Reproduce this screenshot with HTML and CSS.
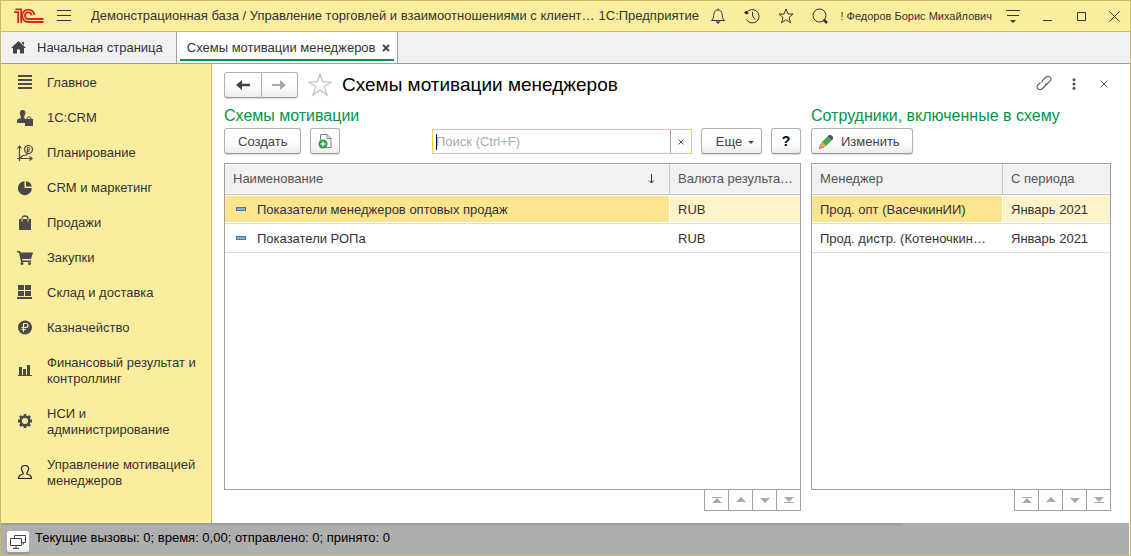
FILE: index.html
```html
<!DOCTYPE html>
<html lang="ru">
<head>
    <meta charset="UTF-8">
    <meta name="viewport" content="width=device-width, initial-scale=1.0">
    <title>Схемы мотивации менеджеров</title>
    <link rel="stylesheet" href="styles.css">
</head>
<body>
    <header class="titlebar">
        <svg class="logo" width="30" height="16" viewBox="0 0 30 16" fill="none" stroke="#d9251d" stroke-width="1.8">
            <path d="M0 4.200H4.200V15M1.500 1.300H7.200V15"/>
            <path d="M20.500 7A6.200 6.200 0 1 0 14.300 14H29.500"/>
            <path d="M17.600 7.500A3.300 3.300 0 1 0 14.300 11H29.500"/>
        </svg>
        <button class="icon-btn menu-btn" aria-label="Меню">
            <svg width="14" height="12" viewBox="0 0 14 12" stroke="#333"><path d="M0 .5H14M0 5.500H14M0 10.500H14"/></svg>
        </button>
        <span class="app-title">Демонстрационная база / Управление торговлей и взаимоотношениями с клиент…</span>
        <span class="app-name">1С:Предприятие</span>
        <div class="title-tools">
            <button class="icon-btn" aria-label="Уведомления">
                <svg width="14" height="16" viewBox="0 0 14 16" fill="none" stroke="#333">
                    <path d="M7 .5V2M.5 12.500C3 10.500 2.500 8 3 5.500C3.500 3 5 2 7 2S10.500 3 11 5.500C11.500 8 11 10.500 13.500 12.500Z"/>
                    <path d="M4.500 13.500H9.500L7 16Z" fill="#333" stroke="none"/>
                </svg>
            </button>
            <button class="icon-btn" aria-label="История">
                <svg width="16" height="16" viewBox="0 0 16 16" fill="none" stroke="#333">
                    <path d="M2.500 5A6.700 6.700 0 1 1 2.500 11.500M8.500 4V8L11 11.500"/>
                    <path d="M0 4.500L2.500 2.500L5 5.500L2 6.500Z" fill="#333" stroke="none"/>
                </svg>
            </button>
            <button class="icon-btn" aria-label="Избранное">
                <svg width="16" height="16" viewBox="0 0 16 16" fill="none" stroke="#333">
                    <path d="M8 1L10 6H15L11 9.500L12.500 14.800L8 11.700L3.500 14.800L5 9.500L1 6H6Z"/>
                </svg>
            </button>
            <button class="icon-btn" aria-label="Поиск">
                <svg width="16" height="16" viewBox="0 0 16 16" fill="none" stroke="#333">
                    <circle cx="7.500" cy="7.500" r="6.500"/>
                    <path d="M11.500 11.500L15 15" stroke-width="2.500"/>
                </svg>
            </button>
        </div>
        <a class="user" href="#">! Федоров Борис Михайлович</a>
        <div class="window-tools">
            <button class="icon-btn" aria-label="Сервис">
                <svg width="14" height="14" viewBox="0 0 14 14" stroke="#333"><path d="M0 1.500H14M1 6.500H13"/><path d="M4 11H10L7 14Z" fill="#333" stroke="none"/></svg>
            </button>
            <button class="icon-btn" aria-label="Свернуть">
                <svg width="9" height="11" viewBox="0 0 9 11" stroke="#333"><path d="M0 9.500H9"/></svg>
            </button>
            <button class="icon-btn" aria-label="Развернуть">
                <svg width="9" height="9" viewBox="0 0 9 9" fill="none" stroke="#333"><path d="M.5 .5H8.500V8.500H.5Z"/></svg>
            </button>
            <button class="icon-btn" aria-label="Закрыть">
                <svg width="11" height="11" viewBox="0 0 11 11" stroke="#333"><path d="M.5 .5L10.500 10.500M10.500 .5L.5 10.500"/></svg>
            </button>
        </div>
    </header>

    <nav class="tabs">
        <a class="tab tab-home" href="#">
            <svg width="15" height="13" viewBox="0 0 15 13" fill="#444"><path d="M7.500 0L15 7H13V12.500H9V8.500H6V12.500H2V7H0ZM11 1H13V4L11 2.500Z"/></svg>
            Начальная страница
        </a>
        <div class="tab tab-active">
            <a href="#">Схемы мотивации менеджеров</a>
            <button class="icon-btn" aria-label="Закрыть вкладку">
                <svg width="8" height="8" viewBox="0 0 8 8" stroke="#444" stroke-width="1.800"><path d="M1 1L7 7M7 1L1 7"/></svg>
            </button>
        </div>
    </nav>

    <div class="workspace">
        <nav class="sidebar">
            <a class="section" href="#">
                <svg width="16" height="16" viewBox="0 0 16 16" fill="#4a4a4a"><path d="M1 0H15V2H1ZM1 4H15V6H1ZM1 8H15V10H1ZM1 12H15V14H1Z"/></svg>
                <span>Главное</span>
            </a>
            <a class="section" href="#">
                <svg width="16" height="16" viewBox="0 0 16 16" fill="#4a4a4a">
                    <path d="M5.500 0C8 0 8.500 1.500 8.300 3.500C8 5.500 7 6 7 7.500L8 8.500V13H0V10.500C0 9 2 8.500 4 8C4 6 3 5.500 2.800 3.500C2.600 1.500 3.500 0 5.500 0Z"/>
                    <path d="M8 9H16V16H8Z"/><path d="M10 9.500V8Q12 5 14 8V9.500" fill="none" stroke="#4a4a4a"/>
                </svg>
                <span>1С:CRM</span>
            </a>
            <a class="section" href="#">
                <svg width="16" height="16" viewBox="0 0 16 16" fill="none" stroke="#4a4a4a" stroke-width="1.200">
                    <path d="M2.500 1V16M0 13.500H15M.5 3.500L2.500 1L4.500 3.500M12.500 11.500L15 13.500L12.500 15.500M3 13L6 10.500L9 10L12 8"/>
                    <circle cx="11.500" cy="4.500" r="4"/><path d="M10.500 7.500V2.500H12Q13.500 3.500 12 5H9.500M9.500 6.300H12.500" stroke-width="1"/>
                </svg>
                <span>Планирование</span>
            </a>
            <a class="section" href="#">
                <svg width="16" height="16" viewBox="0 0 16 16" fill="#4a4a4a"><path d="M7.500 1.200V8H14.800A7 7 0 1 1 7.500 1.200Z"/><path d="M9 1.200A6.500 6.500 0 0 1 14.800 6.500H9Z"/></svg>
                <span>CRM и маркетинг</span>
            </a>
            <a class="section" href="#">
                <svg width="16" height="16" viewBox="0 0 16 16" fill="#4a4a4a"><path d="M2 4H14V15H2Z"/><path d="M5 6V3.500Q5 1 8 1T11 3.500V6" fill="none" stroke="#4a4a4a" stroke-width="1.300"/><path d="M5 4V6.500M11 4V6.500" stroke="#fbed9e"/></svg>
                <span>Продажи</span>
            </a>
            <a class="section" href="#">
                <svg width="16" height="16" viewBox="0 0 16 16" fill="#4a4a4a"><path d="M0 1H3L3.700 2.500H16L14 9H5.200L5.500 10.500H14V12H4L2 2.500H0Z"/><circle cx="5" cy="13.500" r="1.500"/><circle cx="12.500" cy="13.500" r="1.500"/></svg>
                <span>Закупки</span>
            </a>
            <a class="section" href="#">
                <svg width="16" height="16" viewBox="0 0 16 16" fill="#4a4a4a"><path d="M1 0H7V5H1ZM8 0H14V5H8ZM1 6H7V11H1ZM8 6H14V11H8ZM0 12H15V14H0Z"/></svg>
                <span>Склад и доставка</span>
            </a>
            <a class="section" href="#">
                <svg width="16" height="16" viewBox="0 0 16 16" fill="none"><circle cx="8" cy="7.500" r="7" fill="#4a4a4a"/><path d="M6.500 12V3.500H9Q11 3.500 11 5.500T9 7.500H4.500M4.500 9.500H9" stroke="#fbed9e" stroke-width="1.200"/></svg>
                <span>Казначейство</span>
            </a>
            <a class="section" href="#">
                <svg width="16" height="16" viewBox="0 0 16 16" fill="#4a4a4a"><path d="M2 4H5V12H2ZM6 6H9V12H6ZM10 2H13V12H10ZM1 12H15V13H1Z"/></svg>
                <span>Финансовый результат и контроллинг</span>
            </a>
            <a class="section" href="#">
                <svg width="16" height="16" viewBox="0 1 16 16" fill="none" stroke="#4a4a4a"><circle cx="8" cy="8" r="4.300" stroke-width="2.500"/><path d="M8 1V3M8 13V15M1 8H3M13 8H15M3 3L4.500 4.500M11.500 11.500L13 13M3 13L4.500 11.500M11.500 4.500L13 3" stroke-width="2.800"/></svg>
                <span>НСИ и администрирование</span>
            </a>
            <a class="section" href="#">
                <svg width="16" height="16" viewBox="0 1 16 16" fill="none" stroke="#222" stroke-width="1.200"><path d="M8 1.500C10.800 1.500 11.800 3.200 11.500 5.200C11.300 7 9.800 8 9.800 10C12 10.500 14.500 11 14.500 14.500H1.500C1.500 11 4 10.500 6.200 10C6.200 8 4.700 7 4.500 5.200C4.200 3.200 5.200 1.500 8 1.500Z"/></svg>
                <span>Управление мотивацией менеджеров</span>
            </a>
        </nav>

        <main class="content">
            <div class="page-head">
                <div class="history">
                    <button aria-label="Назад"><svg width="14" height="10" viewBox="0 0 14 10" fill="#444"><path d="M0 5L6 0V3.700H14V6.300H6V10Z"/></svg></button>
                    <button aria-label="Вперед"><svg width="14" height="10" viewBox="0 0 14 10" fill="#aaa"><path d="M14 5L8 0V4H0V6H8V10Z"/></svg></button>
                </div>
                <button class="icon-btn favorite" aria-label="В избранное">
                    <svg width="24" height="24" viewBox="0 0 24 24" fill="none" stroke="#b9bec4" stroke-width="1.200"><path d="M12 1.500L14.800 9H23L16.500 13.800L19 22L12 17L5 22L7.500 13.800L1 9H9.200Z"/></svg>
                </button>
                <h1>Схемы мотивации менеджеров</h1>
                <div class="page-tools">
                    <button class="icon-btn" aria-label="Получить ссылку">
                        <svg width="16" height="18" viewBox="0 0 16 18" fill="none" stroke="#555" stroke-width="1.100"><path d="M6 7.500Q6 5.500 7.500 4.500L10 2Q12 .5 14 2.200T14 6.200L11.500 8.700Q10.500 9.500 9 9.500M10 8.500Q10 10.500 8.500 11.500L6 14Q4 15.500 2 13.800T2 9.800L4.500 7.300"/></svg>
                    </button>
                    <button class="icon-btn" aria-label="Еще">
                        <svg width="4" height="12" viewBox="0 0 4 12" fill="#555"><circle cx="2" cy="1.700" r="1.500"/><circle cx="2" cy="6" r="1.500"/><circle cx="2" cy="10.300" r="1.500"/></svg>
                    </button>
                    <button class="icon-btn" aria-label="Закрыть форму">
                        <svg width="8" height="8" viewBox="0 0 8 8" stroke="#555"><path d="M.5 .5L7.500 7.500M7.500 .5L.5 7.500"/></svg>
                    </button>
                </div>
            </div>

            <div class="panels">
                <section class="panel">
                    <h2>Схемы мотивации</h2>
                    <div class="toolbar">
                        <button class="btn">Создать</button>
                        <button class="btn btn-square" aria-label="Создать копированием">
                            <svg width="14" height="16" viewBox="0 0 14 16" fill="none">
                                <path d="M2.500 7V1.500H9L13 5.500V14.500H8M9 1.500V5.500H13" stroke="#77879a"/>
                                <circle cx="5" cy="11" r="4.500" fill="#2e9b3d"/><path d="M5 8.500V13.500M2.500 11H7.500" stroke="#fff" stroke-width="1.500"/>
                            </svg>
                        </button>
                        <div class="search">
                            <input type="text" placeholder="Поиск (Ctrl+F)" aria-label="Поиск">
                            <button aria-label="Очистить"><svg width="6" height="6" viewBox="0 0 6 6" stroke="#555"><path d="M.5 .5L5.500 5.500M5.500 .5L.5 5.500"/></svg></button>
                        </div>
                        <button class="btn btn-more">Еще <svg width="6" height="3" viewBox="0 0 6 3" fill="#444"><path d="M0 0H6L3 3Z"/></svg></button>
                        <button class="btn btn-square btn-help">?</button>
                    </div>
                    <div class="list">
                        <table>
                            <thead>
                                <tr>
                                    <th><div class="sorted">Наименование <svg width="7" height="10" viewBox="0 0 7 10" fill="none" stroke="#333"><path d="M3.500 0V9M1 6.500L3.500 9L6 6.500"/></svg></div></th>
                                    <th class="col-currency">Валюта результатов</th>
                                </tr>
                            </thead>
                            <tbody>
                                <tr class="selected">
                                    <td><span class="item-mark"></span>Показатели менеджеров оптовых продаж</td>
                                    <td>RUB</td>
                                </tr>
                                <tr>
                                    <td><span class="item-mark"></span>Показатели РОПа</td>
                                    <td>RUB</td>
                                </tr>
                            </tbody>
                        </table>
                    </div>
                    <div class="pager">
                        <button aria-label="В начало"><svg width="10" height="6" viewBox="0 0 10 6" fill="#aaa"><path d="M0 0H10V1H0ZM5 1L10 6H0Z"/></svg></button>
                        <button aria-label="Вверх"><svg width="10" height="6" viewBox="0 0 10 6" fill="#aaa"><path d="M5 0L10 5H0Z"/></svg></button>
                        <button aria-label="Вниз"><svg width="10" height="6" viewBox="0 0 10 6" fill="#aaa"><path d="M0 1H10L5 6Z"/></svg></button>
                        <button aria-label="В конец"><svg width="10" height="6" viewBox="0 0 10 6" fill="#aaa"><path d="M0 5H10V6H0ZM0 0H10L5 5Z"/></svg></button>
                    </div>
                </section>

                <section class="panel">
                    <h2>Сотрудники, включенные в схему</h2>
                    <div class="toolbar">
                        <button class="btn btn-edit">
                            <svg width="14" height="14" viewBox="0 0 14 14"><path d="M0 14L1.500 9L5 12.500Z" fill="#444"/><path d="M1.500 9L3 7L7 11L5 12.500L1 13Z" fill="#e5a553"/><path d="M3 7L8.500 1.500L12.500 5.500L7 11Z" fill="#45ad51"/><path d="M8.500 1.500L10 0H12L14 2V4L12.500 5.500Z" fill="#46566b"/></svg>
                            Изменить
                        </button>
                    </div>
                    <div class="list">
                        <table>
                            <thead>
                                <tr>
                                    <th>Менеджер</th>
                                    <th class="col-period">С периода</th>
                                </tr>
                            </thead>
                            <tbody>
                                <tr class="selected">
                                    <td>Прод. опт (ВасечкинИИ)</td>
                                    <td>Январь 2021</td>
                                </tr>
                                <tr>
                                    <td>Прод. дистр. (КотеночкинАА)</td>
                                    <td>Январь 2021</td>
                                </tr>
                            </tbody>
                        </table>
                    </div>
                    <div class="pager">
                        <button aria-label="В начало"><svg width="10" height="6" viewBox="0 0 10 6" fill="#aaa"><path d="M0 0H10V1H0ZM5 1L10 6H0Z"/></svg></button>
                        <button aria-label="Вверх"><svg width="10" height="6" viewBox="0 0 10 6" fill="#aaa"><path d="M5 0L10 5H0Z"/></svg></button>
                        <button aria-label="Вниз"><svg width="10" height="6" viewBox="0 0 10 6" fill="#aaa"><path d="M0 1H10L5 6Z"/></svg></button>
                        <button aria-label="В конец"><svg width="10" height="6" viewBox="0 0 10 6" fill="#aaa"><path d="M0 5H10V6H0ZM0 0H10L5 5Z"/></svg></button>
                    </div>
                </section>
            </div>
        </main>
    </div>

    <footer class="statusbar">
        <div class="load-line"></div>
        <div class="status-row">
            <button class="calls-btn" aria-label="Вызовы сервера">
                <svg width="16" height="14" viewBox="0 0 16 14" fill="none" stroke="#444"><path d="M4.500 3V.5H15.500V7.500H12M.5 3.500H11.500V10.500H.5ZM6 10.500V13M3 13.500H9M13.500 7.500V9.500"/></svg>
            </button>
            <span>Текущие вызовы: 0; время: 0,00; отправлено: 0; принято: 0</span>
        </div>
    </footer>
</body>
</html>
```

FILE: styles.css
```css
* {
    box-sizing: border-box;
}

body {
    margin: 0;
    min-height: 100vh;
    display: flex;
    flex-direction: column;
    border: 1px solid #c8b968;
    background: #fff;
    color: #333;
    font-family: "Liberation Sans", Arial, sans-serif;
    font-size: 13px;
    line-height: 16px;
}

a {
    color: inherit;
    text-decoration: none;
}

button {
    font: inherit;
    color: #444;
    cursor: pointer;
}

svg {
    display: block;
    flex: none;
}

.icon-btn {
    display: flex;
    align-items: center;
    justify-content: center;
    padding: 0;
    border: none;
    background: none;
}

/* title bar */
.titlebar {
    display: flex;
    align-items: center;
    height: 31px;
    padding-left: 13px;
    background: #fbed9e;
    border-bottom: 1px solid #c8b968;
    white-space: nowrap;
}

.menu-btn {
    width: 14px;
    margin: 0 20px 0 13px;
}

.app-title {
    min-width: 0;
    overflow: hidden;
    text-overflow: ellipsis;
}

.app-name {
    margin-left: 4px;
}

.title-tools,
.window-tools {
    display: flex;
}

.title-tools {
    margin-left: auto;
}

.title-tools .icon-btn,
.window-tools .icon-btn {
    width: 34px;
    height: 30px;
}

.window-tools .icon-btn:last-child {
    width: 32px;
}

.user {
    margin: 0 4px 0 3px;
    font-size: 11px;
}

/* tabs */
.tabs {
    display: flex;
    height: 32px;
    background: #f1f1f1;
    border-bottom: 1px solid #a0a0a0;
}

.tab {
    display: flex;
    align-items: center;
    border-right: 1px solid #a0a0a0;
    white-space: nowrap;
}

.tab-home {
    gap: 11px;
    padding: 0 13px 0 10px;
}

.tab-active {
    gap: 6px;
    padding: 0 7px 0 10px;
    background: linear-gradient(#009646, #009646) center bottom 2px / calc(100% - 6px) 2px no-repeat #fff;
}

/* sections */
.workspace {
    flex: 1;
    display: flex;
}

.sidebar {
    flex: none;
    width: 211px;
    padding-top: 1px;
    background: #fbed9e;
    border-right: 1px solid #c8b968;
}

.section {
    display: flex;
    align-items: center;
    gap: 14px;
    padding: 10px 12px 9px 16px;
}

/* form */
.content {
    flex: 1;
    min-width: 0;
    display: flex;
    flex-direction: column;
    padding: 8px 19px 12px 12px;
}

.page-head {
    display: flex;
    align-items: center;
    height: 26px;
}

.history {
    display: flex;
    width: 74px;
    height: 26px;
}

.history button,
.btn,
.calls-btn {
    display: flex;
    align-items: center;
    justify-content: center;
    border: 1px solid #b0b0b0;
    border-bottom-color: #999;
    border-radius: 3px;
    background: linear-gradient(#fff 50%, #ececec);
    box-shadow: 0 1px 1px rgba(0, 0, 0, 0.15);
}

.history button {
    flex: 1;
    padding: 0;
}

.history button:first-child {
    border-radius: 3px 0 0 3px;
}

.history button:last-child {
    border-left: none;
    border-radius: 0 3px 3px 0;
}

.favorite {
    margin: 0 10px;
}

h1 {
    margin: 0;
    color: #000;
    font-size: 19px;
    font-weight: normal;
    line-height: 24px;
}

.page-tools {
    display: flex;
    align-self: flex-start;
    margin-left: auto;
}

.page-tools .icon-btn {
    width: 30px;
    height: 24px;
}

.page-tools .icon-btn:last-child {
    margin-right: -8px;
}

.panels {
    flex: 1;
    display: grid;
    grid-template-columns: minmax(0, 1fr) 300px;
    gap: 10px;
    padding-top: 8px;
}

.panel {
    display: flex;
    flex-direction: column;
}

h2 {
    margin: 0 0 2px;
    color: #009646;
    font-size: 16px;
    font-weight: normal;
    line-height: 20px;
}

.toolbar {
    display: flex;
    gap: 9px;
    height: 26px;
    margin-bottom: 9px;
}

.btn {
    padding: 2px 13px 0;
}

.btn-square {
    width: 30px;
    padding: 0;
}

.btn-more {
    gap: 6px;
    width: 61px;
    padding: 2px 5px 0 12px;
}

.btn-help {
    color: #000;
    font-size: 14px;
    font-weight: bold;
}

.btn-edit {
    gap: 8px;
    padding: 2px 12px 0 7px;
}

.search {
    display: flex;
    width: 260px;
    height: 25px;
    margin: 1px 0 0 auto;
    border: 1px solid #f5cf3c;
}

.search input {
    flex: 1;
    min-width: 0;
    padding: 0 3px;
    border: none;
    outline: none;
    font: inherit;
}

/* caret of the empty field */
.search input:placeholder-shown {
    background: linear-gradient(#000, #000) 3px center / 1px 16px no-repeat #fff;
}

.search input::placeholder {
    color: #aaa;
}

.search button {
    display: flex;
    align-items: center;
    justify-content: center;
    width: 21px;
    padding: 0;
    border: none;
    border-left: 1px solid #a0a0a0;
    background: #fff;
}

.list {
    flex: 1;
    border: 1px solid #a0a0a0;
}

table {
    width: 100%;
    table-layout: fixed;
    border-collapse: separate;
    border-spacing: 0;
}

th,
td {
    height: 29px;
    padding: 1px 6px 0 8px;
    border-bottom: 1px solid #ddd;
    box-shadow: inset 0 1px #fff, inset 0 -1px #fff;
    overflow: hidden;
    text-align: left;
    text-overflow: ellipsis;
    white-space: nowrap;
}

th {
    height: 31px;
    padding-top: 0;
    background: #f1f1f1;
    border-bottom-color: #c0c0c0;
    color: #555;
    font-weight: normal;
}

th:first-child {
    border-right: 1px solid #ccc;
}

td:first-child {
    padding-right: 8px;
    border-right: 1px solid #fff;
}

.col-currency {
    width: 130px;
}

.col-period {
    width: 107px;
}

.sorted {
    display: flex;
    align-items: center;
    justify-content: space-between;
    padding-right: 8px;
}

.selected td {
    background: #fef2c8;
}

.selected td:first-child {
    background: #fde48f;
}

.item-mark {
    display: inline-block;
    width: 10px;
    height: 4px;
    margin: 0 11px 3px 3px;
    border: 1px solid #54758f;
    background: #77b4dc;
}

.pager {
    align-self: flex-end;
    display: flex;
    border-left: 1px solid #a0a0a0;
}

.pager button {
    display: flex;
    align-items: center;
    justify-content: center;
    width: 24px;
    height: 21px;
    padding: 0;
    border: 1px solid #a0a0a0;
    border-width: 0 1px 1px 0;
    background: #fff;
}

/* status bar */
.statusbar {
    height: 32px;
    margin-right: 1px;
    background: #aeaeae;
    color: #000;
}

.load-line {
    width: 80%;
    height: 2px;
    background: #9b9f9b;
}

.status-row {
    display: flex;
    gap: 5px;
    padding: 5px 5px 0;
}

.calls-btn {
    width: 24px;
    height: 23px;
    padding: 0;
}
```
